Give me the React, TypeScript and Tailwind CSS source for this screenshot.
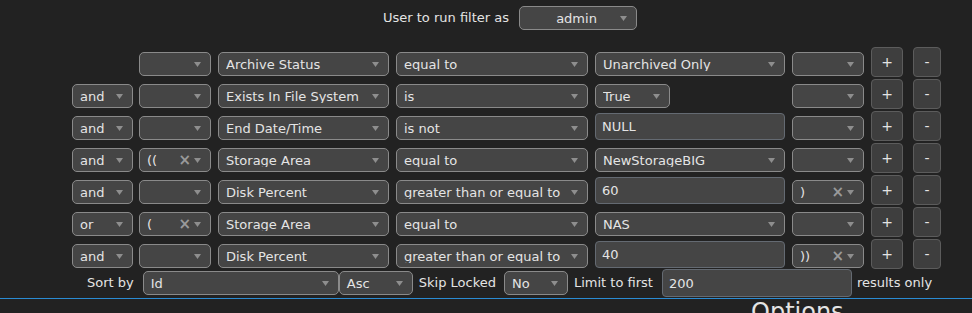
import React from "react"

interface Row {
  join?: string;
  open?: string;
  field: string;
  op: string;
  value: { kind: "select" | "input" | "short"; text: string };
  close?: string;
}

const rows: Row[] = [
  { field: "Archive Status", op: "equal to", value: { kind: "select", text: "Unarchived Only" } },
  { join: "and", field: "Exists In File System", op: "is", value: { kind: "short", text: "True" } },
  { join: "and", field: "End Date/Time", op: "is not", value: { kind: "input", text: "NULL" } },
  { join: "and", open: "((", field: "Storage Area", op: "equal to", value: { kind: "select", text: "NewStorageBIG" } },
  { join: "and", field: "Disk Percent", op: "greater than or equal to", value: { kind: "input", text: "60" }, close: ")" },
  { join: "or", open: "(", field: "Storage Area", op: "equal to", value: { kind: "select", text: "NAS" } },
  { join: "and", field: "Disk Percent", op: "greater than or equal to", value: { kind: "input", text: "40" }, close: "))" },
]

function Arrow() {
  return (
    <svg width="7" height="5" viewBox="0 0 7 5" className="shrink-0">
      <polygon points="0,0 7,0 3.5,5" fill="#8e8e8e" />
    </svg>
  )
}

function Select({ text, width, clear }: { text?: string; width: string; clear?: boolean }) {
  return (
    <div className={`${width} h-[24px] mb-[3px] flex items-center rounded-[5px] border border-[#8a8a8a] bg-[#454545] pl-[7px] pr-[9px]`}>
      <span className="flex-1 truncate leading-none pt-[1px]">{text}</span>
      {clear && <span className="text-[#9a9a9a] font-bold text-[15px] leading-none mr-[3px]">×</span>}
      <Arrow />
    </div>
  )
}

function Input({ text, width }: { text: string; width: string }) {
  return (
    <div className={`${width} h-[27px] mb-[3px] flex items-center rounded-[4px] border border-[#646a72] bg-[#454545] pl-[6px]`}>
      <span className="leading-none">{text}</span>
    </div>
  )
}

function Btn({ label, width }: { label: string; width: string }) {
  return (
    <div className={`${width} h-[30px] mb-[2px] flex items-center justify-center rounded-[4px] border border-[#5c5c5c] bg-[#3e3e3e] text-[14px]`}>
      {label}
    </div>
  )
}

export default function App() {
  return (
    <div className="w-[972px] h-[313px] overflow-hidden bg-[#222222] text-[#e4e4e4] text-[13px]" style={{ fontFamily: '"DejaVu Sans", Verdana, sans-serif' }}>
      {/* run-as header */}
      <div className="pt-[6px] ml-[383px] flex items-center">
        <span>User to run filter as</span>
        <div className="ml-[10px]">
          <div className="w-[118px] h-[24px] flex items-center rounded-[5px] border border-[#8a8a8a] bg-[#454545] pl-[7px] pr-[9px]">
            <span className="flex-1 text-center pl-[6px] leading-none pt-[1px]">admin</span>
            <Arrow />
          </div>
        </div>
      </div>

      {/* filter rows */}
      <div className="mt-[17px] ml-[72px]">
        {rows.map((r, i) => (
          <div key={i} className="h-[32px] flex items-end">
            <div className="w-[67px] flex">
              {r.join && <Select text={r.join} width="w-[61px]" />}
            </div>
            <div className="w-[79px] flex">
              <Select text={r.open} width="w-[72px]" clear={!!r.open} />
            </div>
            <div className="w-[178px] flex">
              <Select text={r.field} width="w-[171px]" />
            </div>
            <div className="w-[199px] flex">
              <Select text={r.op} width="w-[192px]" />
            </div>
            <div className="w-[197px] flex items-end">
              {r.value.kind === "select" && <Select text={r.value.text} width="w-[190px]" />}
              {r.value.kind === "short" && <Select text={r.value.text} width="w-[75px]" />}
              {r.value.kind === "input" && <Input text={r.value.text} width="w-[190px]" />}
            </div>
            <div className="w-[79px] flex">
              <Select text={r.close} width="w-[72px]" clear={!!r.close} />
            </div>
            <div className="w-[42px] flex">
              <Btn label="+" width="w-[32px]" />
            </div>
            <Btn label="-" width="w-[28px]" />
          </div>
        ))}
      </div>

      {/* sort row */}
      <div className="-mt-[3px] h-[30px] flex items-center ml-[87px]">
        <span>Sort by</span>
        <div className="ml-[9px] flex items-center">
          <div className="w-[196px] h-[24px] flex items-center rounded-[5px] border border-[#8a8a8a] bg-[#454545] pl-[7px] pr-[9px]">
            <span className="flex-1 leading-none pt-[1px]">Id</span>
            <Arrow />
          </div>
          <div className="w-[74px] h-[24px] flex items-center rounded-[5px] border border-[#8a8a8a] bg-[#454545] pl-[7px] pr-[9px]">
            <span className="flex-1 leading-none pt-[1px]">Asc</span>
            <Arrow />
          </div>
        </div>
        <span className="ml-[6px]">Skip Locked</span>
        <div className="ml-[8px] w-[64px] h-[24px] flex items-center rounded-[5px] border border-[#8a8a8a] bg-[#454545] pl-[7px] pr-[9px]">
          <span className="flex-1 leading-none pt-[1px]">No</span>
          <Arrow />
        </div>
        <span className="ml-[6px]">Limit to first</span>
        <div className="ml-[9px] w-[190px] h-[28px] flex items-center rounded-[4px] border border-[#646a72] bg-[#454545] pl-[6px]">
          <span className="leading-none">200</span>
        </div>
        <span className="ml-[5px]">results only</span>
      </div>

      <div className="border-t border-[#2a8bd2]" />
      <div className="ml-[751px] text-[24px] leading-[28px] -mt-[1px]">Options</div>
    </div>
  )
}
